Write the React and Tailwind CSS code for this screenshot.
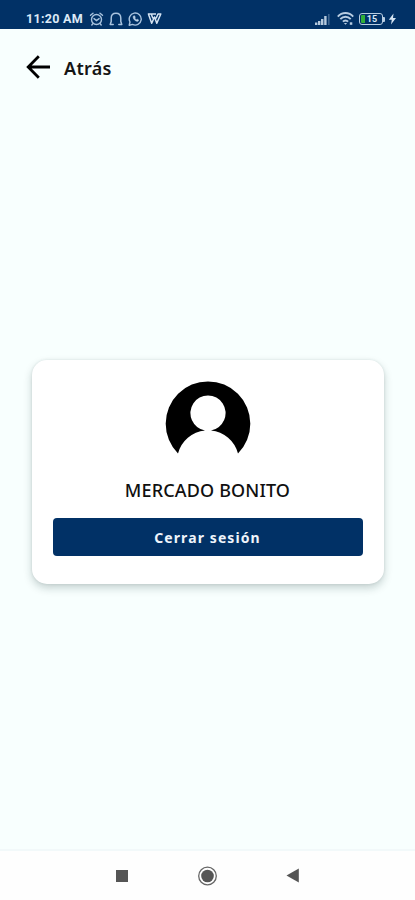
function StatusBar() {
  return (
    <header className="h-[29px] shrink-0 bg-[#013166] flex items-start justify-between pt-[11px] pl-[26px] pr-[18px] text-[#dce9f7]">
      <div className="flex items-center h-4">
        <span className="w-[58px] font-[Roboto] text-[12.5px] leading-4 font-bold tracking-[0.3px] whitespace-nowrap">11:20 AM</span>

        {/* alarm */}
        <svg className="ml-[5px]" width="15" height="14" viewBox="0 0 15 14" fill="none" stroke="#a9c3de" strokeWidth="1.4" strokeLinecap="round">
          <circle cx="7.5" cy="7.5" r="5" />
          <path d="M1.5 3.2 4 1.2M13.5 3.2 11 1.2M3.8 11.8 2.8 13M11.2 11.8l1 1.2M5 6.6l2.5 2 2.6-2" />
        </svg>

        {/* headset */}
        <svg className="ml-[5px]" width="14" height="14" viewBox="0 0 14 14" fill="none" stroke="#a9c3de" strokeWidth="1.5" strokeLinecap="round" strokeLinejoin="round">
          <path d="M4.2 12.5H1.2L2.2 9.5V6.2C2.2 3.2 4.2 1.3 7 1.3s4.8 1.9 4.8 4.9v3.3l1 3H9.8" />
        </svg>

        {/* whatsapp */}
        <svg className="ml-[5px]" width="15" height="14" viewBox="0 0 15 14" fill="none" stroke="#a9c3de" strokeWidth="1.4" strokeLinejoin="round">
          <path d="M1.2 13.2 2 10A6 6 0 1 1 4.5 12.4Z" />
          <path d="M5.2 4.2c-.4 2.8 2 5.2 4.8 5.1l.7-1.2-1.5-.9-.8.6C7.5 7.4 7 6.8 6.7 6l.6-.7-.7-1.5Z" fill="#c8daec" strokeWidth=".6" />
        </svg>

        {/* wps */}
        <svg className="ml-[4px]" width="15" height="14" viewBox="0 0 15 14" fill="none" stroke="#d5e4f3" strokeWidth="1.5" strokeLinejoin="round">
          <path d="M.8 2h8.2M1.5 2.2l3.2 9L7.5 5l2.3 6.2L13.8 2h-2.8L9 6.5M4.3 2.2l1.7 4.3" />
        </svg>
      </div>

      <div className="flex items-center h-4">
        {/* signal */}
        <svg width="16" height="12" viewBox="0 0 16 12">
          <path d="M0 12V9.5h2.4V12ZM3 12V8h2.4V12ZM6 12V6h2.4V12ZM9.2 12V3h2.4V12Z" fill="#b5c9dd" />
          <path d="M13 1h1.6v11H13Z" fill="#3c648f" />
        </svg>

        {/* wifi */}
        <svg className="ml-[6px]" width="17" height="14" viewBox="0 0 17 14" fill="none" stroke="#b8cde2" strokeWidth="1.9">
          <path d="M.8 4.6C5-.2 12-.2 16.2 4.6M3.3 7.2c3-3.3 7.4-3.3 10.4 0M5.9 9.7c1.5-1.6 3.7-1.6 5.2 0" />
          <path d="m6.9 10.9 1.6 1.9 1.6-1.9Z" fill="#b8cde2" stroke="none" />
          <path d="M12.8 10.3h2.5v2.5h-2.5Z" fill="#b8cde2" stroke="none" />
        </svg>

        {/* battery */}
        <div className="ml-[5px] flex items-center">
          <div className="w-[24px] h-[12px] rounded-[3px] border-[1.5px] border-[#b8cde2] p-px flex items-center">
            <span className="w-[4px] h-full rounded-l-[1px] bg-[#2fae38]" />
            <span className="w-[14px] text-center font-[Roboto] text-[9px] leading-[9px] font-bold">15</span>
          </div>
          <span className="w-[2px] h-[5px] rounded-r-[1px] bg-[#b8cde2]" />
        </div>
        <svg className="ml-[3px]" width="9" height="12" viewBox="0 0 9 12">
          <path d="M5.5.5.8 6.8h3L3 11.5l5-6.6H5Z" fill="#d5e4f3" />
        </svg>
      </div>
    </header>
  );
}

function Avatar() {
  return (
    <svg width="86" height="73" viewBox="0 0 86 73">
      <path
        fillRule="evenodd"
        d="M13 72.5A42.3 42.3 0 1 1 73 72.5A31 31 0 0 0 46 49.4A17.6 17.6 0 1 0 40 49.4A31 31 0 0 0 13 72.5Z"
        fill="#000"
      />
    </svg>
  );
}

function AccountCard({ name }) {
  return (
    <section className="mx-auto w-[352px] h-[224px] rounded-[15px] bg-white px-[21px] flex flex-col items-center shadow-[0_4px_9px_rgba(20,50,50,0.22),0_0_3px_rgba(20,50,50,0.1)]">
      <div className="mt-[21px]">
        <Avatar />
      </div>
      <h1 className="mt-[24px] h-6 font-['Noto_Sans',sans-serif] text-[18px] leading-6 font-medium text-[#101010] tracking-[0.15px] whitespace-nowrap">
        {name}
      </h1>
      <button className="mt-[16px] w-full h-[38px] shrink-0 rounded-[4px] bg-[#013166] font-['Noto_Sans',sans-serif] text-[14px] font-bold tracking-[1.1px] text-[#eef4fb]">
        Cerrar sesión
      </button>
    </section>
  );
}

function NavBar() {
  return (
    <nav className="h-[51px] shrink-0 bg-[#fefefe] border-t-2 border-[#f2f9fa]">
      <div className="h-full pl-[116px] pr-[116px] flex items-center justify-between">
        <span className="w-[12px] h-[12px] bg-[#555]" />
        <svg width="20" height="20" viewBox="0 0 20 20">
          <circle cx="10.5" cy="10" r="8.8" fill="none" stroke="#666" strokeWidth="1.3" />
          <circle cx="10.5" cy="10" r="6.3" fill="#555" />
        </svg>
        <svg width="13" height="15" viewBox="0 0 13 15">
          <path d="M.5 7.5 12.8.5v14Z" fill="#555" />
        </svg>
      </div>
    </nav>
  );
}

export default function App() {
  return (
    <div className="w-[415px] h-[900px] bg-[#f8fffe] flex flex-col overflow-hidden">
      <StatusBar />

      <main className="flex-1 flex flex-col">
        <button className="mt-[26px] ml-[26px] h-6 flex items-center text-black">
          <svg width="25" height="24" viewBox="0 0 25 24" fill="none" stroke="currentColor" strokeWidth="2.8">
            <path d="M24 12H2.5M12.8 1.3 2.2 12l10.6 10.7" />
          </svg>
          <span className="ml-[13px] pt-[2px] font-['Noto_Sans',sans-serif] text-[18px] leading-6 font-semibold tracking-[0.3px] text-[#151515]">Atrás</span>
        </button>

        <div className="mt-[281px]">
          <AccountCard name="MERCADO BONITO" />
        </div>
      </main>

      <NavBar />
    </div>
  );
}
